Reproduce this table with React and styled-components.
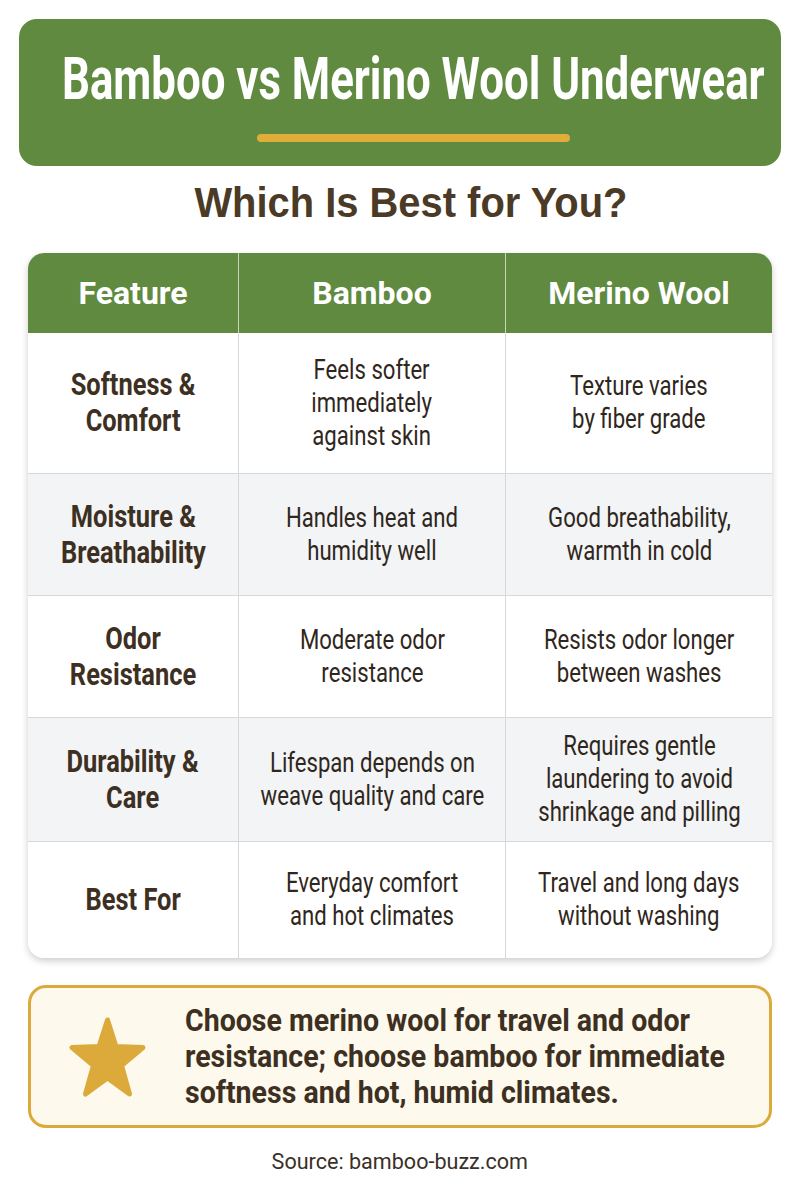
import React from 'react'
import styled, { createGlobalStyle } from 'styled-components'

const sans = `"Roboto", "Liberation Sans", sans-serif`

const GlobalStyle = createGlobalStyle`
  html, body {
    margin: 0;
    padding: 0;
    background: #ffffff;
  }
  body {
    font-family: ${sans};
    color: #3b2f22;
  }
`

// the reference uses a condensed face; Roboto squeezed sideways stands in for it
const Squeeze = styled.span`
  display: inline-block;
  white-space: nowrap;
  transform: scaleX(${p => p.$x || 0.82});
  transform-origin: ${p => (p.$left ? 'left center' : 'center center')};
`

const Page = styled.div`
  width: 800px;
  height: 1200px;
  box-sizing: border-box;
  padding: 19px 19px 0;
  display: flex;
  flex-direction: column;
  align-items: center;
  overflow: hidden;
`

const Banner = styled.header`
  width: 100%;
  height: 147px;
  box-sizing: border-box;
  background: #5f8a3f;
  border-radius: 18px;
  display: flex;
  flex-direction: column;
  align-items: center;
  padding: 24px 0 0 26px;
`

const Title = styled.h1`
  margin: 0;
  width: 100%;
  font-size: 60px;
  font-weight: 700;
  color: #ffffff;
  line-height: 72px;
  height: 72px;
  display: flex;
  justify-content: center;
  overflow: hidden;
`

const Rule = styled.div`
  width: 313px;
  height: 8px;
  border-radius: 4px;
  background: #e0ad3a;
  margin-top: 19px;
`

const Subtitle = styled.h2`
  margin: 13px 0 0 22px;
  font-family: "Liberation Sans", "Roboto", sans-serif;
  font-size: 42px;
  font-weight: 700;
  color: #4a3a26;
  line-height: 48px;
`

const Table = styled.div`
  width: 744px;
  margin-top: 26px;
  border-radius: 16px;
  overflow: hidden;
  box-shadow: 0 3px 7px rgba(0, 0, 0, 0.2);
  display: grid;
  grid-template-columns: 210px 267px 267px;
  grid-template-rows: 80px 140px 122px 122px 124px 117px;
`

const HeadCell = styled.div`
  background: #5f8a3f;
  color: #ffffff;
  font-size: 32px;
  font-weight: 700;
  display: flex;
  align-items: center;
  justify-content: center;
  border-left: ${p => (p.$first ? 'none' : '1.5px solid #c9d8bd')};
`

const Cell = styled.div`
  background: ${p => (p.$alt ? '#f2f4f6' : '#ffffff')};
  border-top: ${p => (p.$top ? 'none' : '1.5px solid #d6d9dc')};
  border-left: ${p => (p.$first ? 'none' : '1.5px solid #d6d9dc')};
  display: flex;
  align-items: center;
  justify-content: center;
  text-align: center;
  font-size: ${p => (p.$label ? '31px' : '27px')};
  font-weight: ${p => (p.$label ? 700 : 400)};
  line-height: ${p => (p.$label ? '36px' : '33px')};
  color: ${p => (p.$label ? '#3d3022' : '#2f261c')};
`

const Callout = styled.div`
  width: 744px;
  height: 143px;
  box-sizing: border-box;
  margin-top: 27px;
  border: 3px solid #dcaa3a;
  border-radius: 18px;
  background: #fdf9ec;
  display: flex;
  align-items: center;
  padding-left: 38px;
`

const StarIcon = styled.svg`
  width: 77px;
  height: 80px;
  flex-shrink: 0;
`

const CalloutText = styled.p`
  margin: 0 0 0 39px;
  font-size: 31px;
  font-weight: 700;
  line-height: 36px;
  color: #3d3022;
`

const Source = styled.div`
  margin-top: 21px;
  font-size: 22px;
  line-height: 26px;
  color: #3a3028;
`

const rows = [
  ['Softness &\nComfort', 'Feels softer\nimmediately\nagainst skin', 'Texture varies\nby fiber grade'],
  ['Moisture &\nBreathability', 'Handles heat and\nhumidity well', 'Good breathability,\nwarmth in cold'],
  ['Odor\nResistance', 'Moderate odor\nresistance', 'Resists odor longer\nbetween washes'],
  ['Durability &\nCare', 'Lifespan depends on\nweave quality and care', 'Requires gentle\nlaundering to avoid\nshrinkage and pilling'],
  ['Best For', 'Everyday comfort\nand hot climates', 'Travel and long days\nwithout washing'],
]

const Lines = ({ text, x, left }) => (
  <Squeeze $x={x} $left={left}>
    {text.split('\n').map((line, i) => (
      <React.Fragment key={i}>
        {i > 0 && <br />}
        {line}
      </React.Fragment>
    ))}
  </Squeeze>
)

const App = () => (
  <>
    <GlobalStyle />
    <Page>
      <Banner>
        <Title>
          <Squeeze $x={0.73}>Bamboo vs Merino Wool Underwear</Squeeze>
        </Title>
        <Rule />
      </Banner>
      <Subtitle>
        <Squeeze $x={0.95}>Which Is Best for You?</Squeeze>
      </Subtitle>
      <Table>
        <HeadCell $first>Feature</HeadCell>
        <HeadCell>Bamboo</HeadCell>
        <HeadCell>Merino Wool</HeadCell>
        {rows.map((row, r) =>
          row.map((text, c) => (
            <Cell
              key={`${r}-${c}`}
              $alt={r % 2 === 1}
              $top={r === 0}
              $first={c === 0}
              $label={c === 0}
            >
              <Lines text={text} x={0.82} />
            </Cell>
          ))
        )}
      </Table>
      <Callout>
        <StarIcon viewBox="0 0 77 80">
          <path
            d="M38.5 3 L47 29.5 L74 30.5 L52.5 48.5 L60.5 77 L38.5 61 L16.5 77 L24.5 48.5 L3 30.5 L30 29.5 Z"
            fill="#dcaa3a"
            stroke="#dcaa3a"
            strokeWidth="5"
            strokeLinejoin="round"
          />
        </StarIcon>
        <CalloutText>
          <Lines
            text={'Choose merino wool for travel and odor\nresistance; choose bamboo for immediate\nsoftness and hot, humid climates.'}
            x={0.92}
            left
          />
        </CalloutText>
      </Callout>
      <Source>
        <Squeeze $x={0.98}>Source: bamboo-buzz.com</Squeeze>
      </Source>
    </Page>
  </>
)

export default App
